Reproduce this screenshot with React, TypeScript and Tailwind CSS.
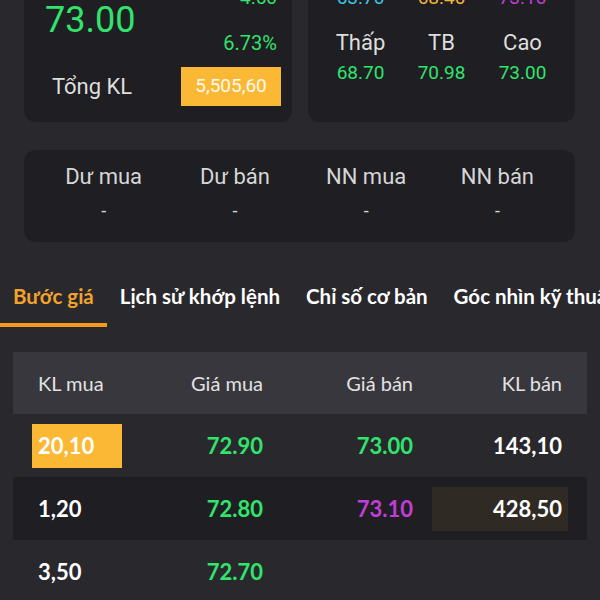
import React from "react";

const green = "text-[#30e46c]";

const rows = [
  { klMua: "20,10", giaMua: "72.90", giaBan: "73.00", klBan: "143,10", banColor: green, hlMua: true, hlBan: false },
  { klMua: "1,20", giaMua: "72.80", giaBan: "73.10", klBan: "428,50", banColor: "text-[#c23ed6]", hlMua: false, hlBan: true },
  { klMua: "3,50", giaMua: "72.70", giaBan: "", klBan: "", banColor: green, hlMua: false, hlBan: false },
];

const tabs = ["Bước giá", "Lịch sử khớp lệnh", "Chỉ số cơ bản", "Góc nhìn kỹ thuật"];

const App: React.FC = () => {
  return (
    <div className="w-[600px] h-[600px] overflow-hidden bg-[#29282d] font-['Roboto',sans-serif]">
      {/* price cards, scrolled so the top is cut */}
      <div className="flex gap-4 pl-6 pr-[25px] -mt-[17px]">
        <div className="w-[268px] h-[139px] rounded-xl bg-[#1f1e23] flex flex-col">
          <div className="flex justify-between pl-[21px] pr-[15px]">
            <div className={`mt-[13px] text-[36px] leading-[48px] ${green}`}>73.00</div>
            <div className="flex flex-col items-end">
              <div className={`text-[19px] leading-[30px] ${green}`}>4.60</div>
              <div className={`mt-[15px] text-[20px] leading-[30px] ${green}`}>6.73%</div>
            </div>
          </div>
          <div className="mt-[9px] flex items-center justify-between pl-[28px] pr-[11px]">
            <span className="text-[22px] text-[#dedede]">Tổng KL</span>
            <div className="w-[100px] h-[39px] bg-[#fbb834] flex items-center justify-center text-[19px] text-[#fffaf0]">
              5,505,60
            </div>
          </div>
        </div>
        <div className="w-[267px] h-[139px] rounded-xl bg-[#1f1e23] px-3 grid grid-cols-3 content-start text-center">
          <div className="text-[19px] leading-[30px] text-[#3cc6e6]">63.70</div>
          <div className="text-[19px] leading-[30px] text-[#f1b43a]">68.40</div>
          <div className="text-[19px] leading-[30px] text-[#c23ed6]">73.10</div>
          <div className="mt-[15px] text-[22px] leading-[30px] text-[#dedede]">Thấp</div>
          <div className="mt-[15px] text-[22px] leading-[30px] text-[#dedede]">TB</div>
          <div className="mt-[15px] text-[22px] leading-[30px] text-[#dedede]">Cao</div>
          <div className={`text-[19px] leading-[30px] ${green}`}>68.70</div>
          <div className={`text-[19px] leading-[30px] ${green}`}>70.98</div>
          <div className={`text-[19px] leading-[30px] ${green}`}>73.00</div>
        </div>
      </div>

      {/* du mua / du ban */}
      <div className="mx-6 mr-[25px] mt-[28px] h-[92px] rounded-xl bg-[#1f1e23] pl-[14px] pr-[12px] grid grid-cols-4 content-center text-center text-[#d6d6d6]">
        <div className="text-[22px] leading-[30px]">Dư mua</div>
        <div className="text-[22px] leading-[30px]">Dư bán</div>
        <div className="text-[22px] leading-[30px]">NN mua</div>
        <div className="text-[22px] leading-[30px]">NN bán</div>
        <div className="text-[18px] leading-[38px]">-</div>
        <div className="text-[18px] leading-[38px]">-</div>
        <div className="text-[18px] leading-[38px]">-</div>
        <div className="text-[18px] leading-[38px]">-</div>
      </div>

      {/* tabs */}
      <div className="mt-[34px] flex whitespace-nowrap font-['Lato',sans-serif] font-bold text-[20.5px] leading-[28px]">
        {tabs.map((t, i) => (
          <div
            key={t}
            className={`px-[13px] pt-[6px] pb-[13px] border-b-4 ${
              i === 0 ? "text-[#f3a22c] border-[#f39a1c]" : "text-white border-transparent"
            }`}
          >
            {t}
          </div>
        ))}
      </div>

      {/* order book */}
      <div className="mt-[25px] mx-[13px] font-['Lato',sans-serif]">
        <div className="h-[62px] bg-[#38373d] px-[25px] grid grid-cols-[100px_125px_150px_149px] items-center text-[20px] text-[#e2e2e2]">
          <div>KL mua</div>
          <div className="text-right">Giá mua</div>
          <div className="text-right">Giá bán</div>
          <div className="text-right">KL bán</div>
        </div>
        {rows.map((r, i) => (
          <div
            key={i}
            className={`h-[63px] px-[25px] grid grid-cols-[100px_125px_150px_149px] items-center text-[22px] font-bold ${
              i === 1 ? "bg-[#1f1e23]" : ""
            }`}
          >
            <div className="flex">
              <div
                className={`-ml-[6px] h-[44px] px-[6px] flex items-center text-white ${
                  r.hlMua ? "w-[90px] bg-[#fbb834]" : ""
                }`}
              >
                {r.klMua}
              </div>
            </div>
            <div className={`text-right ${green}`}>{r.giaMua}</div>
            <div className={`text-right ${r.banColor}`}>{r.giaBan}</div>
            <div className="flex justify-end">
              <div
                className={`-mr-[6px] h-[44px] px-[6px] flex items-center justify-end text-white ${
                  r.hlBan ? "w-[136px] bg-[#302a25]" : ""
                }`}
              >
                {r.klBan}
              </div>
            </div>
          </div>
        ))}
      </div>
    </div>
  );
};

export default App;
